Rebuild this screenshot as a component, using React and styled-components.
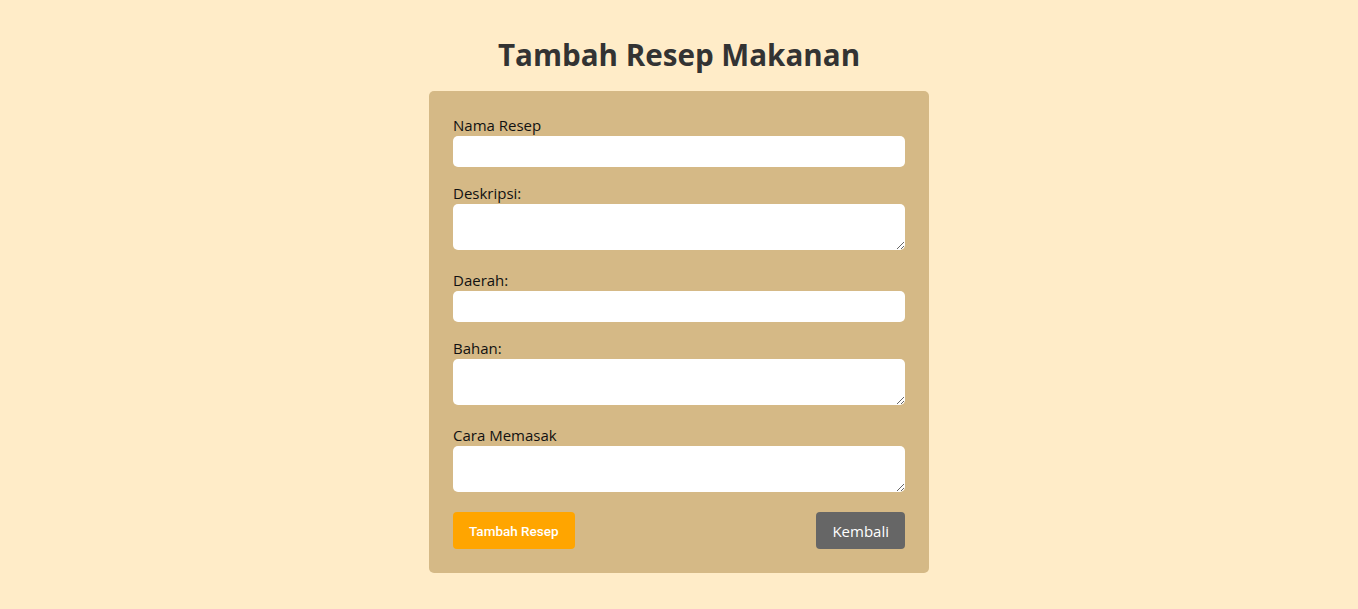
import React from 'react'
import styled, { createGlobalStyle } from 'styled-components'

const Global = createGlobalStyle`
  body {
    margin: 0;
    background-color: #ffecc8;
    font-family: "Open Sans", "Noto Sans", sans-serif;
  }
`

const Page = styled.div`
  min-height: 100vh;
  display: flex;
  flex-direction: column;
  align-items: center;
  padding-top: 35px;
  box-sizing: border-box;
`

const Title = styled.h1`
  margin: 0 0 16px;
  font-size: 29.6px;
  line-height: 40px;
  font-weight: 700;
  color: #333;
`

const Card = styled.form`
  width: 500px;
  box-sizing: border-box;
  padding: 24px;
  background-color: #d5b986;
  border-radius: 5px;
`

const Field = styled.div`
  margin-bottom: ${p => (p.$tall ? '20px' : '16px')};
`

const Label = styled.label`
  display: block;
  font-size: 15px;
  line-height: 21px;
  color: #111;
`

const Input = styled.input`
  display: block;
  width: 100%;
  height: 31px;
  box-sizing: border-box;
  border: none;
  border-radius: 5px;
  background: #fff;
  padding: 0 8px;
  font: inherit;
`

const TextArea = styled.textarea`
  display: block;
  width: 100%;
  height: 46px;
  box-sizing: border-box;
  border: none;
  border-radius: 5px;
  background: #fff;
  padding: 6px 8px;
  font: inherit;
  resize: vertical;
`

const Actions = styled.div`
  display: flex;
  justify-content: space-between;
  align-items: center;
`

const Button = styled.button`
  height: 37px;
  border: none;
  border-radius: 4px;
  color: #fff;
  cursor: pointer;
  background-color: ${p => (p.$primary ? '#ffa500' : '#666')};
  font-family: ${p => (p.$primary ? 'Roboto, "Liberation Sans", sans-serif' : '"Open Sans", sans-serif')};
  font-size: ${p => (p.$primary ? '13.5px' : '15px')};
  font-weight: ${p => (p.$primary ? 500 : 400)};
  padding: 0 16px;
`

const App = () => {
  return (
    <Page>
      <Global />
      <Title>Tambah Resep Makanan</Title>
      <Card onSubmit={e => e.preventDefault()}>
        <Field>
          <Label>Nama Resep</Label>
          <Input type="text" />
        </Field>
        <Field $tall>
          <Label>Deskripsi:</Label>
          <TextArea />
        </Field>
        <Field>
          <Label>Daerah:</Label>
          <Input type="text" />
        </Field>
        <Field $tall>
          <Label>Bahan:</Label>
          <TextArea />
        </Field>
        <Field $tall>
          <Label>Cara Memasak</Label>
          <TextArea />
        </Field>
        <Actions>
          <Button type="submit" $primary>Tambah Resep</Button>
          <Button type="button">Kembali</Button>
        </Actions>
      </Card>
    </Page>
  )
}

export default App
